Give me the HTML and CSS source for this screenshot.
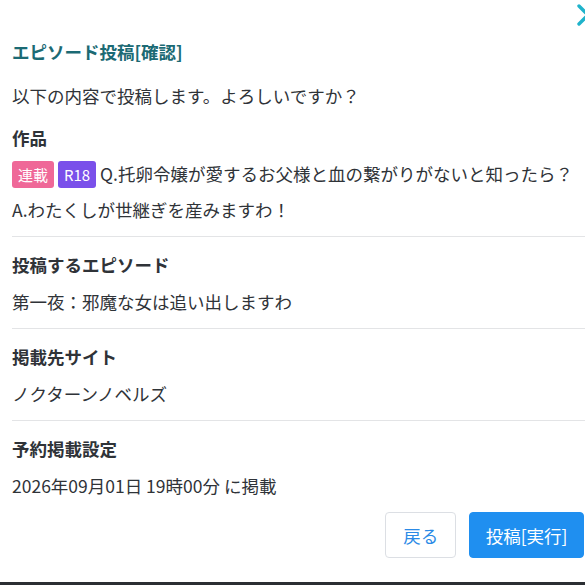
FILE: index.html
```html
<!DOCTYPE html>
<html lang="ja">
<head>
  <meta charset="UTF-8" />
  <title>エピソード投稿[確認]</title>
  <link rel="stylesheet" href="styles.css">
</head>
<body>

  <div class="modal">
    <button class="close-btn" aria-label="閉じる">
      <svg width="24" height="24" viewBox="0 0 24 24">
        <path d="M3 3 L21 21 M21 3 L3 21" stroke="#1fb3cb" stroke-width="3.4" stroke-linecap="round" fill="none" />
      </svg>
    </button>

    <h1 class="modal-title">エピソード投稿[確認]</h1>
    <p class="intro">以下の内容で投稿します。よろしいですか？</p>

    <div class="section first">
      <h2>作品</h2>
      <p class="work-title">
        <span class="badge serial">連載</span> <span class="badge r18">R18</span> Q.托卵令嬢が愛するお父様と血の繋がりがないと知ったら？ A.わたくしが世継ぎを産みますわ！
      </p>
    </div>

    <div class="section">
      <h2>投稿するエピソード</h2>
      <p>第一夜：邪魔な女は追い出しますわ</p>
    </div>

    <div class="section">
      <h2>掲載先サイト</h2>
      <p>ノクターンノベルズ</p>
    </div>

    <div class="section">
      <h2>予約掲載設定</h2>
      <p>2026年09月01日 19時00分 に掲載</p>
    </div>

    <div class="actions">
      <button class="btn back-btn">戻る</button>
      <button class="btn submit-btn">投稿[実行]</button>
    </div>
  </div>

  <div class="page-bottom"></div>

</body>
</html>
```

FILE: styles.css
```css
html, body {
  margin: 0;
  height: 585px;
  overflow: hidden;
}
body {
  font-family: "Noto Sans CJK JP", "Noto Sans", sans-serif;
  font-size: 17.5px;
  color: #2f3338;
  background: #fff;
  position: relative;
}
.modal {
  padding: 39px 0 0 12px;
  height: 543px;
}
.close-btn {
  position: absolute;
  left: 576px;
  top: 3px;
  padding: 0;
  border: none;
  background: none;
  line-height: 0;
}
.modal-title {
  margin: 0;
  font-size: 17.5px;
  line-height: 26px;
  color: #1b6a74;
}
p {
  margin: 0;
  line-height: 26px;
}
.intro {
  margin-top: 18px;
}
.section {
  border-top: 1px solid #e3e4e6;
  padding: 15px 0 13px;
}
.section.first {
  border-top: none;
  padding-top: 16px;
  padding-bottom: 8px;
}
.section h2 {
  margin: 0 0 11px;
  font-size: 17.5px;
  line-height: 26px;
}
.section.first h2 {
  margin-bottom: 5px;
}
.work-title {
  line-height: 36px;
}
.badge {
  display: inline-block;
  height: 27px;
  margin-top: 4.5px;
  font-size: 15px;
  line-height: 27px;
  padding: 0 6px;
  border-radius: 3px;
  color: #fff;
  vertical-align: top;
}
.badge.serial {
  background: #ef6898;
}
.badge.r18 {
  background: #7a50ea;
}
.actions {
  display: flex;
  justify-content: flex-end;
  gap: 13px;
  padding-right: 1px;
}
.btn {
  height: 46px;
  font-family: inherit;
  font-size: 17.5px;
  border-radius: 4px;
  cursor: pointer;
}
.back-btn {
  background: #fff;
  border: 1px solid #dcdfe4;
  color: #2b8ae6;
  padding: 0 17px;
}
.submit-btn {
  background: #1f8ff0;
  border: 1px solid #1f8ff0;
  color: #fff;
  padding: 0 15.5px;
}
.page-bottom {
  position: absolute;
  left: 0;
  right: 0;
  bottom: 0;
  height: 3px;
  background: #2b2e33;
}
```
